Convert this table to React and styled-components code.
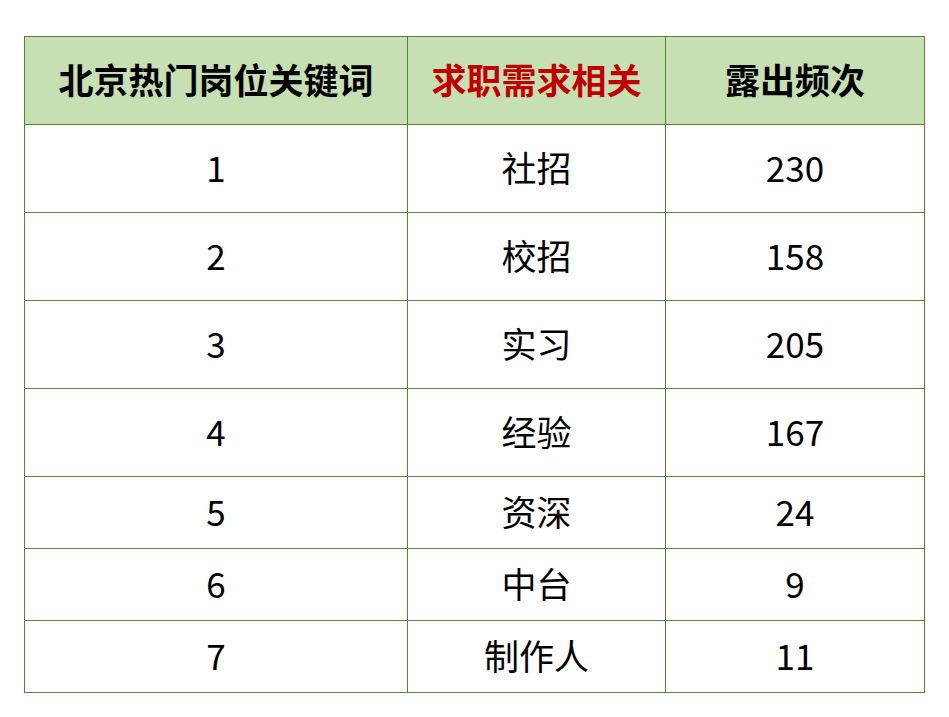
import React from "react";
import styled, { createGlobalStyle } from "styled-components";

const Global = createGlobalStyle`
  html, body { margin: 0; padding: 0; background: #ffffff; }
  body { font-family: "Noto Sans CJK SC", "Noto Sans", sans-serif; }
`;

const Page = styled.div`
  padding: 36px 0 0 24px;
`;

const Grid = styled.div`
  display: grid;
  grid-template-columns: 383px 258px 259px;
  grid-template-rows: 88px repeat(4, 88px) repeat(3, 72px);
  width: max-content;
  border-left: 1px solid #548235;
  border-top: 1px solid #548235;
`;

const Cell = styled.div`
  box-sizing: border-box;
  display: flex;
  align-items: center;
  justify-content: center;
  padding-bottom: 5px;
  border-right: 1px solid #548235;
  border-bottom: 1px solid #548235;
  background: ${(p) => (p.$head ? "#C6E0B4" : "#ffffff")};
  color: ${(p) => (p.$red ? "#C00000" : "#000000")};
  font-size: 35px;
  font-weight: ${(p) => (p.$head ? 700 : 400)};
  line-height: 1;
`;

const rows = [
  ["1", "社招", "230"],
  ["2", "校招", "158"],
  ["3", "实习", "205"],
  ["4", "经验", "167"],
  ["5", "资深", "24"],
  ["6", "中台", "9"],
  ["7", "制作人", "11"],
];

export default function App() {
  return (
    <>
      <Global />
      <Page>
        <Grid>
          <Cell $head>北京热门岗位关键词</Cell>
          <Cell $head $red>求职需求相关</Cell>
          <Cell $head>露出频次</Cell>
          {rows.map((r) =>
            r.map((v, i) => <Cell key={r[0] + "-" + i}>{v}</Cell>)
          )}
        </Grid>
      </Page>
    </>
  );
}
